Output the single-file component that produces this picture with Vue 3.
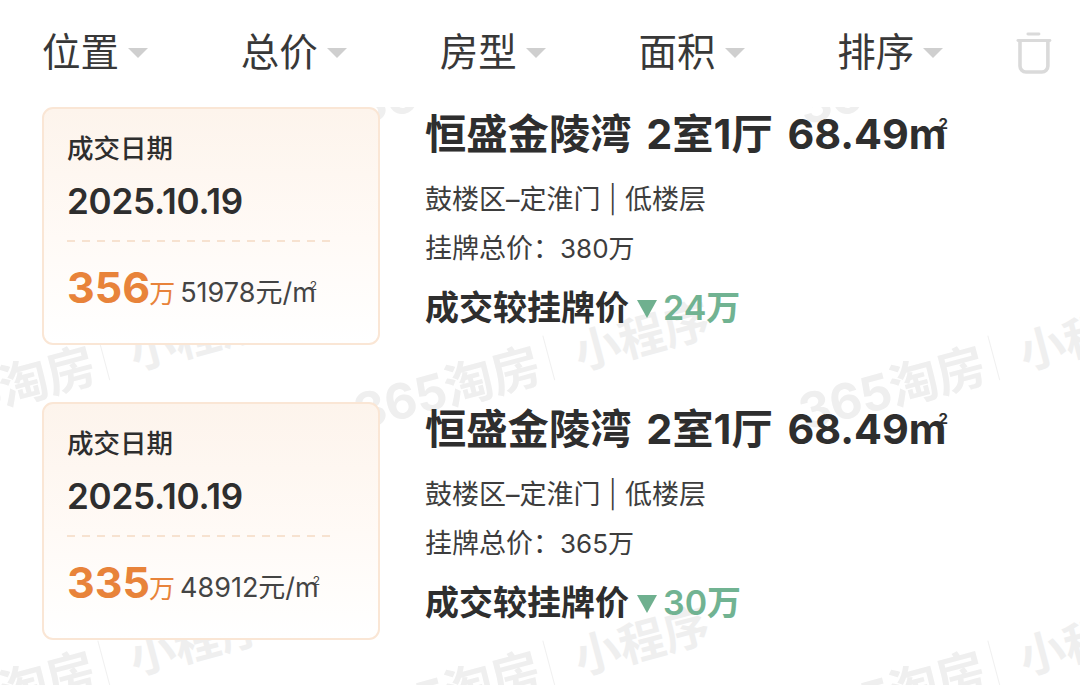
<script setup>
const tabs = ['位置', '总价', '房型', '面积', '排序']

const deals = [
  { date: '2025.10.19', price: 356, unit: 51978, listed: 380, diff: 24 },
  { date: '2025.10.19', price: 335, unit: 48912, listed: 365, diff: 30 }
]

// watermark rows, repeats behind the list
const marks = []
for (let r = 0; r < 3; r++) {
  for (let c = 0; c < 4; c++) {
    marks.push({ id: r + '-' + c, left: -536 + c * 445 + 'px', top: 69 + r * 305 + 'px' })
  }
}
</script>

<template>
  <div class="page">
    <div class="marks">
      <div v-for="m in marks" :key="m.id" class="mark" :style="{ left: m.left, top: m.top }">
        <span>365淘房</span><i></i><span>小程序</span>
      </div>
    </div>

    <header class="filters">
      <div v-for="t in tabs" :key="t" class="tab">
        <span>{{ t }}</span>
        <b class="caret"></b>
      </div>
      <svg class="trash" width="36" height="44" viewBox="0 0 36 44" fill="none" stroke="#dadada" stroke-linecap="round">
        <path d="M12 3h11" stroke-width="3" />
        <path d="M2 9.5h32" stroke-width="3" />
        <path d="M4 11v24a6 6 0 0 0 6 6h16a6 6 0 0 0 6-6V11" stroke-width="3.6" />
      </svg>
    </header>

    <div class="list">
      <div v-for="d in deals" :key="d.price" class="row">
        <div class="card">
          <div class="label">成交日期</div>
          <div class="date">{{ d.date }}</div>
          <div class="dash"></div>
          <div class="prices">
            <span class="price">{{ d.price }}</span>
            <span class="wan">万</span>
            <span class="unit">{{ d.unit }}元/m<sup>2</sup></span>
          </div>
        </div>
        <div class="info">
          <div class="title">恒盛金陵湾 2室1厅 68.49m<sup>2</sup></div>
          <div class="sub">鼓楼区–定淮门<em>|</em>低楼层</div>
          <div class="sub listed">挂牌总价：<span>{{ d.listed }}万</span></div>
          <div class="diff">
            成交较挂牌价
            <b class="down"></b>
            <span>{{ d.diff }}万</span>
          </div>
        </div>
      </div>
    </div>
  </div>
</template>

<style>
html, body {
  margin: 0;
  background: #fff;
}
</style>

<style scoped>
.page {
  position: relative;
  width: 1080px;
  height: 685px;
  overflow: hidden;
  background: #fff;
  color: #2e2e2e;
  font-family: Inter, "Noto Sans CJK SC", sans-serif;
}

.marks {
  position: absolute;
  inset: 0;
}

.mark {
  position: absolute;
  display: flex;
  align-items: center;
  width: 445px;
  white-space: nowrap;
  font-size: 46px;
  font-weight: 700;
  color: #efefef;
  transform: rotate(-15deg);
  transform-origin: left center;
}

.mark span:first-child {
  width: 184px;
  font-size: 49px;
  letter-spacing: -0.5px;
}

.mark i {
  width: 1px;
  height: 46px;
  margin: 0 26px 0 17px;
  background: #f0f0f0;
}

.filters {
  position: relative;
  z-index: 2;
  display: flex;
  align-items: center;
  height: 107px;
  box-sizing: border-box;
  padding: 0 28px 0 42px;
  background: #fff;
}

.tab {
  display: flex;
  align-items: center;
  width: 199.5px;
  margin-top: -10px;
  font-size: 38.5px;
  font-weight: 400;
  color: #383838;
}

.caret {
  width: 0;
  height: 0;
  margin: 9px 0 0 9px;
  border-left: 10px solid transparent;
  border-right: 10px solid transparent;
  border-top: 10px solid #cfcfcf;
}

.trash {
  margin-left: -20px;
  margin-top: -2px;
}

.list {
  position: relative;
  z-index: 1;
  padding: 0 42px;
}

.row {
  display: flex;
  gap: 45px;
  height: 294.5px;
}

.card {
  width: 338px;
  height: 238px;
  box-sizing: border-box;
  padding: 21px 23px 0;
  border: 2px solid #fae6d5;
  border-radius: 11px;
  background: linear-gradient(180deg, #fdf4ec 0%, #fffaf6 55%, #fff 100%);
}

.label {
  font-size: 26.5px;
  line-height: 36px;
  font-weight: 500;
}

.date {
  margin-top: 15px;
  font-size: 35px;
  line-height: 40px;
  font-weight: 600;
  letter-spacing: -0.2px;
}

.dash {
  width: 263px;
  height: 2px;
  margin-top: 19px;
  background: repeating-linear-gradient(90deg, #f7e2d0 0 8px, transparent 8px 15px);
}

.prices {
  display: flex;
  align-items: baseline;
  margin-top: 19px;
}

.price {
  font-size: 43px;
  line-height: 52px;
  font-weight: 700;
  color: #e8833a;
}

.wan {
  margin-left: -1px;
  font-size: 26px;
  color: #e8833a;
}

.unit {
  margin-left: 5px;
  font-size: 27px;
  color: #444;
  position: relative;
  top: -1px;
}

.unit sup {
  font-size: 12px;
  margin-left: -6px;
  vertical-align: 12px;
  line-height: 0;
}

.info {
  padding-top: 1px;
}

.title {
  font-size: 41.3px;
  line-height: 52px;
  font-weight: 700;
  word-spacing: 5px;
  white-space: nowrap;
}

.title sup {
  font-size: 15px;
  margin-left: -8px;
  vertical-align: 20px;
  line-height: 0;
}

.sub {
  margin-top: 22px;
  font-size: 27px;
  line-height: 36px;
  font-weight: 400;
  color: #3d3d3d;
  white-space: nowrap;
}

.sub em {
  margin: 0 8px;
  font-style: normal;
  font-weight: 300;
}

.listed {
  margin-top: 13px;
}

.listed span {
  font-size: 26px;
}

.diff {
  display: flex;
  align-items: center;
  margin-top: 20px;
  font-size: 34px;
  line-height: 42px;
  font-weight: 700;
  white-space: nowrap;
}

.down {
  width: 0;
  height: 0;
  margin: 2px 6px 0 8px;
  border-left: 10px solid transparent;
  border-right: 10px solid transparent;
  border-top: 18px solid #6fb08f;
}

.diff span {
  font-weight: 600;
  color: #71b392;
}
</style>
